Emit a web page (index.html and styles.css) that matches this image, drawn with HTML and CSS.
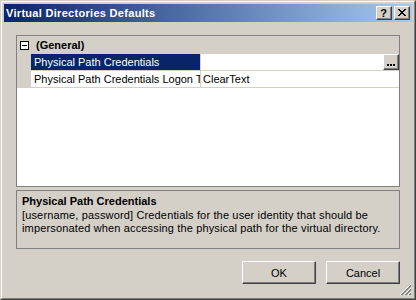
FILE: index.html
```html
<!DOCTYPE html>
<html>
<head>
<meta charset="utf-8">
<link rel="stylesheet" href="styles.css">
</head>
<body>
<div class="window">
  <div class="frame">
    <div class="titlebar">
      <span class="title">Virtual Directories Defaults</span>
      <div class="capbtns">
        <div class="capbtn help">?</div>
        <div class="capbtn close">
          <svg width="8" height="7" viewBox="0 0 8 7" shape-rendering="crispEdges"><path fill="#000" d="M0 0h2v1H0zM6 0h2v1H6zM1 1h2v1H1zM5 1h2v1H5zM2 2h4v1H2zM3 3h2v1H3zM2 4h4v1H2zM1 5h2v1H1zM5 5h2v1H5zM0 6h2v1H0zM6 6h2v1H6z"/></svg>
        </div>
      </div>
    </div>
    <div class="client">
      <div class="grid">
        <div class="cat">
          <span class="toggle"><svg width="9" height="9" viewBox="0 0 9 9" shape-rendering="crispEdges"><rect x="0.5" y="0.5" width="8" height="8" fill="#fff" stroke="#000"/><path d="M2 4h5v1H2z" fill="#000"/></svg></span>
          <span class="catname">(General)</span>
        </div>
        <div class="row selected">
          <div class="margin"></div>
          <div class="label"><span class="label-text">Physical Path Credentials</span></div>
          <div class="value with-btn">
            <span class="ellipsis"><svg width="9" height="2" viewBox="0 0 9 2" shape-rendering="crispEdges"><path fill="#000" d="M0 0h2v2H0zM3 0h2v2H3zM6 0h2v2H6z"/></svg></span>
          </div>
        </div>
        <div class="row">
          <div class="margin"></div>
          <div class="label"><span class="label-text">Physical Path Credentials Logon Type</span></div>
          <div class="value">ClearText</div>
        </div>
      </div>
      <div class="desc">
        <div class="desc-title">Physical Path Credentials</div>
        <div class="desc-text">[username, password] Credentials for the user identity that should be impersonated when accessing the physical path for the virtual directory.</div>
      </div>
      <div class="buttons">
        <div class="btn">OK</div>
        <div class="btn">Cancel</div>
      </div>
      <svg class="grip" width="12" height="12" viewBox="0 0 12 12" shape-rendering="crispEdges">
        <path stroke="#fff" fill="none" d="M11 0L0 11M11 4L4 11M11 8L8 11"/>
        <path stroke="#808080" fill="none" d="M11 1L1 11M11 2L2 11M11 5L5 11M11 6L6 11M11 9L9 11M11 10L10 11"/>
      </svg>
    </div>
  </div>
</div>
</body>
</html>
```

FILE: styles.css
```css
html, body {
  margin: 0;
  padding: 0;
}
body {
  font-family: "Liberation Sans", Arial, sans-serif;
  font-size: 11px;
  color: #000;
  background: #d4d0c8;
}
.window {
  width: 416px;
  height: 300px;
  box-sizing: border-box;
  border: 1px solid;
  border-color: #d4d0c8 #404040 #404040 #d4d0c8;
  background: #d4d0c8;
}
.frame {
  height: 100%;
  box-sizing: border-box;
  border: 1px solid;
  border-color: #fff #808080 #808080 #fff;
  padding: 2px;
  display: flex;
  flex-direction: column;
}
.titlebar {
  height: 18px;
  flex: none;
  background: linear-gradient(to right, #0a246a, #a6caf0);
  display: flex;
  align-items: center;
}
.title {
  flex: 1;
  color: #fff;
  font-weight: bold;
  padding-left: 2px;
  line-height: 18px;
  letter-spacing: 0.3px;
  white-space: nowrap;
}
.capbtns {
  display: flex;
  gap: 2px;
  margin-right: 2px;
}
.capbtn {
  width: 16px;
  height: 14px;
  box-sizing: border-box;
  background: #d4d0c8;
  border: 1px solid;
  border-color: #fff #404040 #404040 #fff;
  box-shadow: inset -1px -1px #808080;
  display: flex;
  align-items: center;
  justify-content: center;
}
.help {
  font-weight: bold;
  font-size: 11px;
  line-height: 12px;
  padding-right: 1px;
}
.close svg {
  display: block;
  margin-right: 1px;
  margin-bottom: 1px;
}
.client {
  flex: 1;
  position: relative;
  padding: 13px 12px 12px;
  display: flex;
  flex-direction: column;
}
.grid {
  height: 152px;
  flex: none;
  box-sizing: border-box;
  border: 1px solid #808080;
  background: #fff;
}
.cat {
  height: 18px;
  background: #d4d0c8;
  display: flex;
  align-items: center;
}
.toggle {
  margin-left: 3px;
  width: 9px;
  height: 9px;
}
.toggle svg {
  display: block;
}
.catname {
  font-weight: bold;
  margin-left: 7px;
}
.row {
  height: 17px;
  box-sizing: border-box;
  border-bottom: 1px solid #d4d0c8;
  display: flex;
}
.margin {
  width: 14px;
  background: #d4d0c8;
}
.label {
  width: 170px;
  box-sizing: border-box;
  padding-left: 3px;
  border-right: 1px solid #d4d0c8;
  white-space: nowrap;
  overflow: hidden;
  line-height: 16px;
}
.selected .label {
  background: #0a246a;
  color: #fff;
}
.value {
  flex: 1;
  padding-left: 2px;
  line-height: 16px;
  white-space: nowrap;
}
.value.with-btn {
  display: flex;
  justify-content: flex-end;
  padding-left: 0;
}
.ellipsis {
  width: 16px;
  height: 16px;
  box-sizing: border-box;
  background: #d4d0c8;
  border: 1px solid;
  border-color: #fff #404040 #404040 #fff;
  box-shadow: inset -1px -1px #808080;
  display: flex;
  align-items: flex-end;
  justify-content: center;
  padding-bottom: 3px;
}
.ellipsis svg {
  display: block;
}
.desc {
  margin-top: 3px;
  height: 59px;
  flex: none;
  box-sizing: border-box;
  border: 1px solid #808080;
  padding: 4px 5px 0;
  line-height: 13px;
}
.desc-title {
  font-weight: bold;
  margin-bottom: 1px;
}
.desc-text {
  letter-spacing: 0.15px;
}
.buttons {
  margin-top: 12px;
  display: flex;
  justify-content: flex-end;
  gap: 10px;
}
.btn {
  width: 74px;
  height: 23px;
  box-sizing: border-box;
  border: 1px solid;
  border-color: #fff #404040 #404040 #fff;
  box-shadow: inset -1px -1px #808080;
  display: flex;
  align-items: center;
  justify-content: center;
}
.grip {
  position: absolute;
  right: 0;
  bottom: 0;
  display: block;
}
```
